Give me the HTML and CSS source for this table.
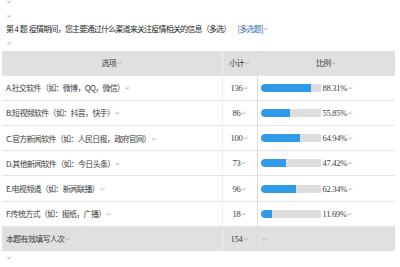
FILE: index.html
```html
<!DOCTYPE html>
<html lang="zh-CN">
<head>
<meta charset="utf-8">
<link rel="stylesheet" href="styles.css">
</head>
<body>
<div class="page">
  <p class="para first"><span class="pm">↵</span></p>
  <p class="para"><span class="pm">↵</span></p>
  <p class="para title">第<span class="num">4</span>题&nbsp;&nbsp;疫情期间，您主要通过什么渠道来关注疫情相关的信息（多选）<span class="tag">[多选题]</span><span class="pm">↵</span></p>
  <p class="para"><span class="pm">↵</span></p>
  <table class="stats">
    <colgroup><col class="c-opt"><col class="c-cnt"><col class="c-pct"></colgroup>
    <tr class="head"><td class="center">选项<span class="pm">↵</span></td><td class="center">小计<span class="pm">↵</span></td><td class="center">比例<span class="pm">↵</span></td></tr>
    <tr><td class="opt">A.社交软件（如：微博，QQ，微信）<span class="pm">↵</span></td><td class="cnt">136<span class="pm">↵</span></td><td><div class="ratio"><div class="track"><div class="fill" style="width:50px"></div></div><span class="pct">88.31%<span class="pm">↵</span></span></div></td></tr>
    <tr><td class="opt">B.短视频软件（如：抖音，快手）<span class="pm">↵</span></td><td class="cnt">86<span class="pm">↵</span></td><td><div class="ratio"><div class="track"><div class="fill" style="width:29px"></div></div><span class="pct">55.85%<span class="pm">↵</span></span></div></td></tr>
    <tr><td class="opt">C.官方新闻软件（如：人民日报，政府官网）<span class="pm">↵</span></td><td class="cnt">100<span class="pm">↵</span></td><td><div class="ratio"><div class="track"><div class="fill" style="width:39px"></div></div><span class="pct">64.94%<span class="pm">↵</span></span></div></td></tr>
    <tr><td class="opt">D.其他新闻软件（如：今日头条）<span class="pm">↵</span></td><td class="cnt">73<span class="pm">↵</span></td><td><div class="ratio"><div class="track"><div class="fill" style="width:25px"></div></div><span class="pct">47.42%<span class="pm">↵</span></span></div></td></tr>
    <tr><td class="opt">E.电视频道（如：新闻联播）<span class="pm">↵</span></td><td class="cnt">96<span class="pm">↵</span></td><td><div class="ratio"><div class="track"><div class="fill" style="width:35px"></div></div><span class="pct">62.34%<span class="pm">↵</span></span></div></td></tr>
    <tr><td class="opt">F.传统方式（如：报纸，广播）<span class="pm">↵</span></td><td class="cnt">18<span class="pm">↵</span></td><td><div class="ratio"><div class="track"><div class="fill" style="width:11px"></div></div><span class="pct">11.69%<span class="pm">↵</span></span></div></td></tr>
    <tr class="total"><td class="opt">本题有效填写人次<span class="pm">↵</span></td><td class="cnt">154<span class="pm">↵</span></td><td class="opt"><span class="pm">↵</span></td></tr>
  </table>
  <p class="para"><span class="pm">↵</span></p>
</div>
</body>
</html>
```

FILE: styles.css
```css
html, body {
  margin: 0;
  padding: 0;
  background: #ffffff;
}
body {
  font-family: "Noto Sans CJK SC", "Liberation Serif", sans-serif;
  font-weight: 400;
  font-size: 8px;
  letter-spacing: -0.7px;
  color: #3c3c3c;
  width: 400px;
  height: 267px;
  overflow: hidden;
}
.page {
  padding: 0 5px 0 2px;
}
.para {
  margin: 0;
  height: 13.5px;
  line-height: 13.5px;
  padding-left: 4px;
  white-space: nowrap;
}
.para.first {
  margin-top: -5px;
}
.title {
  color: #2a2a2a;
  letter-spacing: -0.8px;
}
.num {
  font-family: "Liberation Serif", serif;
  font-size: 9px;
  letter-spacing: 0;
  padding: 0 1px;
}
.tag {
  color: #3b6fb6;
  margin-left: 7px;
}
.pm {
  font-family: "DejaVu Sans", sans-serif;
  font-size: 6px;
  color: #b5b5b5;
  letter-spacing: 0;
  margin-left: 1px;
  vertical-align: 1px;
}
.stats {
  margin-top: 1.5px;
  width: 393px;
  border-collapse: collapse;
  table-layout: fixed;
}
.c-opt { width: 220px; }
.c-cnt { width: 35px; }
.c-pct { width: 138px; }
.stats td {
  height: 24.2px;
  padding: 0;
  border-bottom: 1px solid #e4e4e4;
  border-left: 1px solid #f0f0f0;
  vertical-align: middle;
  white-space: nowrap;
}
.stats td:first-child {
  border-left: none;
}
.stats td:last-child {
  border-left-color: #dcdcdc;
}
.stats tr.head td,
.stats tr.total td {
  background: #e0e0e0;
}
.stats tr.total td {
  border-bottom: none;
}
.center {
  text-align: center;
}
.opt {
  padding-left: 4px !important;
}
.cnt {
  text-align: center;
  font-family: "Liberation Serif", serif;
  font-size: 8.5px;
  letter-spacing: -0.3px;
}
.ratio {
  display: flex;
  align-items: center;
  padding-left: 3px;
}
.track {
  width: 60px;
  height: 8px;
  background: #dedede;
  border-radius: 4px 0 0 4px;
  overflow: hidden;
  display: flex;
}
.fill {
  height: 100%;
  background: #2f9ae8;
  border-radius: 4px 0 0 4px;
}
.pct {
  font-family: "Liberation Serif", serif;
  font-size: 8.5px;
  letter-spacing: -0.3px;
  margin-left: 2px;
}
```
